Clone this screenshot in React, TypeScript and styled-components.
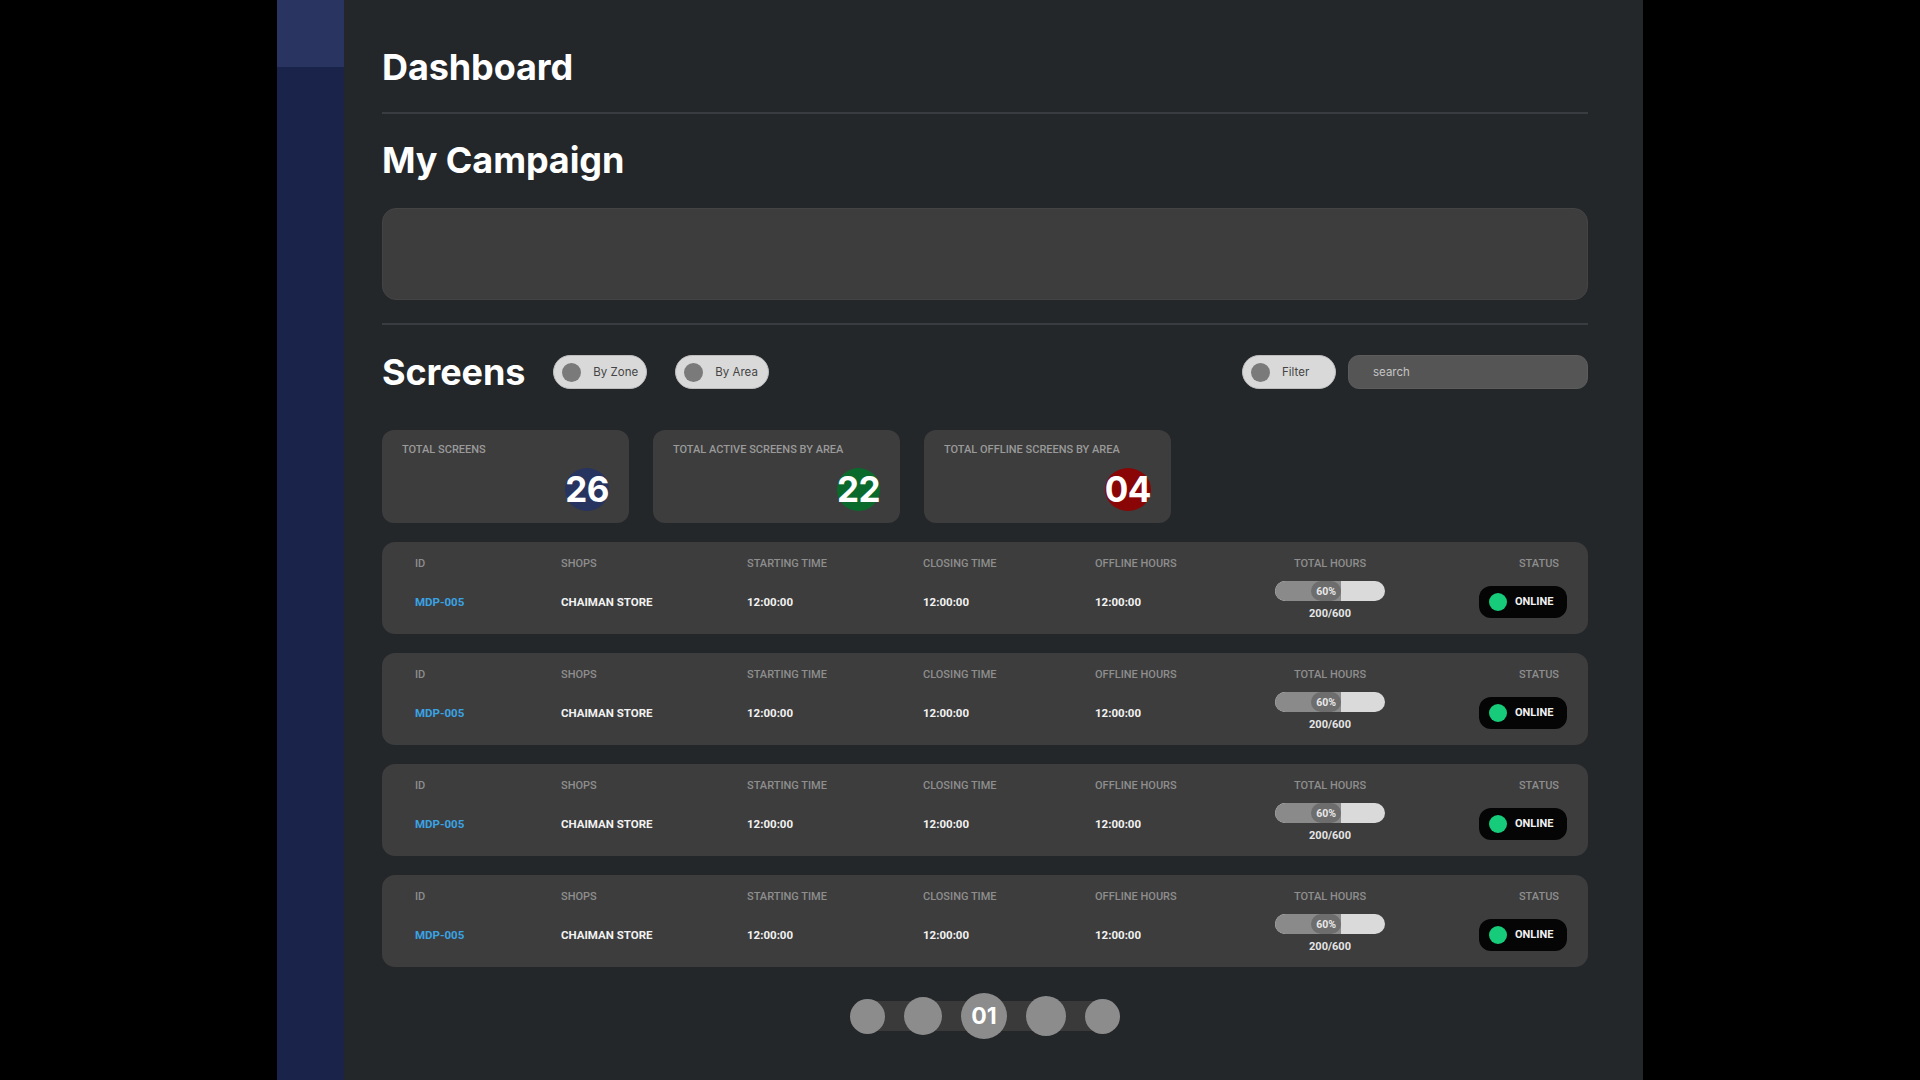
import React from 'react'
import styled, { createGlobalStyle } from 'styled-components'

const GlobalStyle = createGlobalStyle`
  html, body {
    margin: 0;
    padding: 0;
    background: #000;
    font-family: Inter, "Noto Sans", sans-serif;
  }
  * { box-sizing: border-box; }
`

const Frame = styled.div`
  width: 1366px;
  height: 1080px;
  margin: 0 auto;
  display: flex;
  overflow: hidden;
`

const Sidebar = styled.aside`
  width: 67px;
  flex-shrink: 0;
  background: #1a2349;
  display: flex;
  flex-direction: column;
`

const SideTop = styled.div`
  height: 67px;
  background: #2a3460;
`

const Main = styled.main`
  flex: 1;
  background: #24272a;
  padding: 46px 55px 0 38px;
  display: flex;
  flex-direction: column;
`

const Heading = styled.h1<{ $top?: number }>`
  margin: ${({ $top }) => $top || 0}px 0 0;
  font-size: 36px;
  line-height: 42px;
  font-weight: 700;
  color: #fff;
  letter-spacing: -0.1px;
`

const Divider = styled.hr<{ $top: number }>`
  margin: ${({ $top }) => $top}px 0 0;
  border: none;
  height: 2px;
  background: #393c40;
`

const CampaignBox = styled.div`
  margin-top: 27px;
  height: 92px;
  border-radius: 14px;
  background: #3d3d3d;
  border: 1px solid #444;
`

const ScreensBar = styled.div`
  margin-top: 30px;
  height: 34px;
  display: flex;
  align-items: center;
  gap: 28px;
`

const Spacer = styled.div`
  flex: 1;
`

const Pill = styled.button`
  height: 34px;
  width: 94px;
  border-radius: 17px;
  border: 1px solid #bdbdbd;
  background: #d9d9d9;
  display: flex;
  align-items: center;
  gap: 12px;
  padding: 0 0 0 8px;
  font-family: Inter, sans-serif;
  font-size: 11.5px;
  color: #444;
  cursor: pointer;
`

const PillDot = styled.span`
  width: 19px;
  height: 19px;
  border-radius: 50%;
  background: #7a7a7a;
`

const FilterGroup = styled.div`
  display: flex;
  align-items: center;
  gap: 12px;
`

const Search = styled.input`
  width: 240px;
  height: 34px;
  border-radius: 11px;
  border: 1px solid #5c5c5c;
  background: #555;
  padding: 0 24px;
  font-family: Inter, sans-serif;
  font-size: 11.5px;
  color: #ccc;
  outline: none;
  &::placeholder { color: #c4c4c4; }
`

const StatRow = styled.div`
  margin-top: 41px;
  display: flex;
  gap: 24px;
`

const StatCard = styled.div`
  width: 247px;
  height: 93px;
  border-radius: 12px;
  background: #3d3d3d;
  padding: 13px 20px 0 20px;
  display: flex;
  flex-direction: column;
`

const StatLabel = styled.div`
  font-family: Roboto, sans-serif;
  font-size: 11px;
  font-weight: 500;
  color: #9a9a9a;
`

const StatValue = styled.div`
  margin-top: 12px;
  align-self: flex-end;
  display: flex;
  align-items: center;
  font-size: 35px;
  font-weight: 700;
  color: #fff;
  line-height: 43px;
`

const StatBadge = styled.span<{ $color: string }>`
  display: inline-block;
  min-width: 43px;
  height: 43px;
  border-radius: 50%;
  background: ${({ $color }) => $color};
  text-align: center;
  letter-spacing: -0.5px;
`

const Rows = styled.div`
  margin-top: 19px;
  display: flex;
  flex-direction: column;
  gap: 19px;
`

const Row = styled.div`
  height: 92px;
  border-radius: 13px;
  background: #3d3d3d;
  padding: 14px 21px 0 33px;
  display: grid;
  grid-template-columns: 146px 186px 176px 172px 160px 150px 1fr;
  grid-template-rows: 14px 63px;
  align-items: center;
`

const HeadCell = styled.div<{ $align?: string }>`
  font-family: Roboto, sans-serif;
  font-size: 11px;
  font-weight: 500;
  color: #8e8e8e;
  text-align: ${({ $align }) => $align || 'left'};
  padding-right: ${({ $align }) => ($align === 'right' ? '8px' : '0')};
`

const Cell = styled.div<{ $link?: boolean }>`
  font-family: Roboto, sans-serif;
  font-size: 11.5px;
  font-weight: 700;
  color: ${({ $link }) => ($link ? '#3aa3e3' : '#f2f2f2')};
`

const HoursCell = styled.div`
  display: flex;
  flex-direction: column;
  align-items: center;
  gap: 6px;
  margin-top: -2px;
`

const Track = styled.div`
  width: 110px;
  height: 20px;
  border-radius: 10px;
  background: #dadada;
  overflow: hidden;
  display: flex;
`

const Fill = styled.div`
  height: 100%;
  background: #8a8a8a;
  display: flex;
  justify-content: flex-end;
  border-radius: 10px 0 0 10px;
`

const FillLabel = styled.span`
  height: 100%;
  padding: 0 5px;
  border-radius: 10px;
  background: #6d6d6d;
  font-family: Roboto, sans-serif;
  font-size: 10.5px;
  font-weight: 700;
  color: #e8e8e8;
  display: flex;
  align-items: center;
`

const HoursText = styled.div`
  font-family: Roboto, sans-serif;
  font-size: 11px;
  font-weight: 700;
  color: #e6e6e6;
`

const StatusCell = styled.div`
  justify-self: end;
`

const OnlinePill = styled.div`
  width: 88px;
  height: 32px;
  border-radius: 12px;
  background: #050505;
  display: flex;
  align-items: center;
  gap: 8px;
  padding-left: 10px;
  font-family: Roboto, sans-serif;
  font-size: 11px;
  font-weight: 700;
  color: #f2f2f2;
`

const OnlineDot = styled.span`
  width: 18px;
  height: 18px;
  border-radius: 50%;
  background: #16cc7a;
`

const Pager = styled.div`
  margin-top: 26px;
  align-self: center;
  display: flex;
  align-items: center;
  gap: 19px;
  background: linear-gradient(#3a3a3a, #3a3a3a) center / calc(100% - 30px) 30px no-repeat;
`

const PageDot = styled.button<{ $size: number }>`
  width: ${({ $size }) => $size}px;
  height: ${({ $size }) => $size}px;
  border-radius: 50%;
  border: none;
  padding: 0;
  background: #8c8c8c;
  font-family: Inter, sans-serif;
  font-size: 23px;
  font-weight: 700;
  color: #fff;
  display: flex;
  align-items: center;
  justify-content: center;
`

const rows = [1, 2, 3, 4].map(() => ({
	id: 'MDP-005',
	shop: 'CHAIMAN STORE',
	start: '12:00:00',
	close: '12:00:00',
	offline: '12:00:00',
	percent: 60,
	hours: '200/600'
}))

const App: React.FC = () => {
	return (
		<>
			<GlobalStyle />
			<Frame>
				<Sidebar>
					<SideTop />
				</Sidebar>
				<Main>
					<Heading>Dashboard</Heading>
					<Divider $top={24} />
					<Heading $top={25}>My Campaign</Heading>
					<CampaignBox />
					<Divider $top={23} />

					<ScreensBar>
						<Heading>Screens</Heading>
						<Pill><PillDot />By Zone</Pill>
						<Pill><PillDot />By Area</Pill>
						<Spacer />
						<FilterGroup>
							<Pill><PillDot />Filter</Pill>
							<Search placeholder="search" />
						</FilterGroup>
					</ScreensBar>

					<StatRow>
						<StatCard>
							<StatLabel>TOTAL SCREENS</StatLabel>
							<StatValue><StatBadge $color="#27345f">26</StatBadge></StatValue>
						</StatCard>
						<StatCard>
							<StatLabel>TOTAL ACTIVE SCREENS BY AREA</StatLabel>
							<StatValue><StatBadge $color="#0a6a2c">22</StatBadge></StatValue>
						</StatCard>
						<StatCard>
							<StatLabel>TOTAL OFFLINE SCREENS BY AREA</StatLabel>
							<StatValue><StatBadge $color="#8a0505">04</StatBadge></StatValue>
						</StatCard>
					</StatRow>

					<Rows>
						{ rows.map((r, i) => (
							<Row key={ i }>
								<HeadCell>ID</HeadCell>
								<HeadCell>SHOPS</HeadCell>
								<HeadCell>STARTING TIME</HeadCell>
								<HeadCell>CLOSING TIME</HeadCell>
								<HeadCell>OFFLINE HOURS</HeadCell>
								<HeadCell $align="center">TOTAL HOURS</HeadCell>
								<HeadCell $align="right">STATUS</HeadCell>

								<Cell $link>{ r.id }</Cell>
								<Cell>{ r.shop }</Cell>
								<Cell>{ r.start }</Cell>
								<Cell>{ r.close }</Cell>
								<Cell>{ r.offline }</Cell>
								<HoursCell>
									<Track>
										<Fill style={{ width: `${r.percent}%` }}>
											<FillLabel>{ r.percent }%</FillLabel>
										</Fill>
									</Track>
									<HoursText>{ r.hours }</HoursText>
								</HoursCell>
								<StatusCell>
									<OnlinePill><OnlineDot />ONLINE</OnlinePill>
								</StatusCell>
							</Row>
						)) }
					</Rows>

					<Pager>
						<PageDot $size={35} />
						<PageDot $size={38} />
						<PageDot $size={46}>01</PageDot>
						<PageDot $size={40} />
						<PageDot $size={35} />
					</Pager>
				</Main>
			</Frame>
		</>
	)
}

export default App
